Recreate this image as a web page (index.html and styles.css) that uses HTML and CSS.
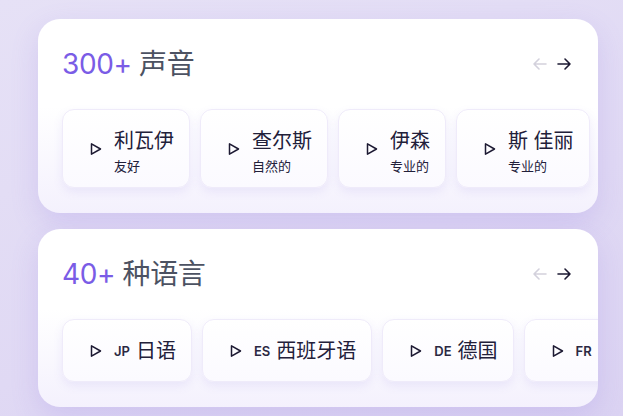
FILE: index.html
```html
<!DOCTYPE html>
<html lang="zh">
<head>
<meta charset="utf-8">
<link rel="stylesheet" href="styles.css">
</head>
<body>
<main class="stack">
  <section class="card">
    <header class="card-head">
      <h2 class="title"><span class="count">300+</span> 声音</h2>
      <div class="nav">
        <svg class="arrow arrow-off" viewBox="0 0 16 16"><path d="M14 8H2M7 3L2 8l5 5"/></svg>
        <svg class="arrow" viewBox="0 0 16 16"><path d="M2 8h12M9 3l5 5-5 5"/></svg>
      </div>
    </header>
    <div class="row">
      <div class="tile tile-voice">
        <svg class="play" viewBox="0 0 16 16"><path d="M5.5 2.8v10.4L14.5 8z"/></svg>
        <div class="voice"><span class="name">利瓦伊</span><span class="sub">友好</span></div>
      </div>
      <div class="tile tile-voice">
        <svg class="play" viewBox="0 0 16 16"><path d="M5.5 2.8v10.4L14.5 8z"/></svg>
        <div class="voice"><span class="name">查尔斯</span><span class="sub">自然的</span></div>
      </div>
      <div class="tile tile-voice">
        <svg class="play" viewBox="0 0 16 16"><path d="M5.5 2.8v10.4L14.5 8z"/></svg>
        <div class="voice"><span class="name">伊森</span><span class="sub">专业的</span></div>
      </div>
      <div class="tile tile-voice">
        <svg class="play" viewBox="0 0 16 16"><path d="M5.5 2.8v10.4L14.5 8z"/></svg>
        <div class="voice"><span class="name">斯 佳丽</span><span class="sub">专业的</span></div>
      </div>
    </div>
  </section>

  <section class="card">
    <header class="card-head">
      <h2 class="title"><span class="count">40+</span> 种语言</h2>
      <div class="nav">
        <svg class="arrow arrow-off" viewBox="0 0 16 16"><path d="M14 8H2M7 3L2 8l5 5"/></svg>
        <svg class="arrow" viewBox="0 0 16 16"><path d="M2 8h12M9 3l5 5-5 5"/></svg>
      </div>
    </header>
    <div class="row">
      <div class="tile tile-lang">
        <svg class="play" viewBox="0 0 16 16"><path d="M5.5 2.8v10.4L14.5 8z"/></svg>
        <span class="code">JP</span><span class="name">日语</span>
      </div>
      <div class="tile tile-lang">
        <svg class="play" viewBox="0 0 16 16"><path d="M5.5 2.8v10.4L14.5 8z"/></svg>
        <span class="code">ES</span><span class="name">西班牙语</span>
      </div>
      <div class="tile tile-lang">
        <svg class="play" viewBox="0 0 16 16"><path d="M5.5 2.8v10.4L14.5 8z"/></svg>
        <span class="code">DE</span><span class="name">德国</span>
      </div>
      <div class="tile tile-lang">
        <svg class="play" viewBox="0 0 16 16"><path d="M5.5 2.8v10.4L14.5 8z"/></svg>
        <span class="code">FR</span><span class="name">法语</span>
      </div>
    </div>
  </section>
</main>
</body>
</html>
```

FILE: styles.css
```css
html, body {
  margin: 0;
  height: 100%;
}
body {
  background: linear-gradient(160deg, #e6e1f6 0%, #e0d9f4 60%, #dbd3f2 100%);
  font-family: "Inter", "Noto Sans CJK SC", sans-serif;
  overflow: hidden;
}
.stack {
  display: flex;
  flex-direction: column;
  gap: 16px;
  padding: 19px 25px 0 38px;
}
.card {
  width: 560px;
  box-sizing: border-box;
  border-radius: 22px;
  background: linear-gradient(180deg, #ffffff 0%, #ffffff 45%, #f4f1fd 100%);
  box-shadow: 0 10px 28px rgba(140, 115, 225, 0.2);
  padding: 24px 0 25px 24px;
  overflow: hidden;
}
.card-head {
  height: 42px;
  display: flex;
  align-items: center;
  justify-content: space-between;
  padding-right: 26px;
  margin-bottom: 24px;
}
.title {
  margin: 0;
  font-size: 28px;
  font-weight: 400;
  color: #4c5262;
  line-height: 42px;
  letter-spacing: -0.4px;
}
.count {
  color: #7a5ce6;
}
.nav {
  display: flex;
  gap: 8px;
}
.arrow {
  width: 16px;
  height: 16px;
  fill: none;
  stroke: #1d1a33;
  stroke-width: 1.6;
  stroke-linecap: round;
  stroke-linejoin: round;
}
.arrow-off {
  stroke: #d3d1dc;
}
.row {
  display: flex;
  gap: 10px;
}
.tile {
  flex-shrink: 0;
  display: flex;
  align-items: center;
  box-sizing: border-box;
  padding: 0 15px 0 23px;
  border-radius: 12px;
  border: 1px solid #efebfa;
  background: linear-gradient(180deg, #ffffff 0%, #fbfaff 100%);
  box-shadow: 0 4px 10px rgba(140, 120, 220, 0.12);
  color: #22203a;
}
.tile-voice {
  height: 79px;
}
.tile-lang {
  height: 63px;
}
.play {
  width: 16px;
  height: 16px;
  flex-shrink: 0;
  margin-right: 12px;
  fill: none;
  stroke: #1d1a33;
  stroke-width: 1.5;
  stroke-linejoin: round;
}
.voice {
  display: flex;
  flex-direction: column;
  gap: 5px;
  padding-top: 5px;
}
.name {
  font-size: 20px;
  line-height: 24px;
  color: #22203a;
  white-space: nowrap;
}
.sub {
  font-size: 13px;
  line-height: 16px;
  color: #22203a;
}
.code {
  font-size: 13px;
  font-weight: 600;
  color: #2b2842;
  margin-right: 6px;
}
```
